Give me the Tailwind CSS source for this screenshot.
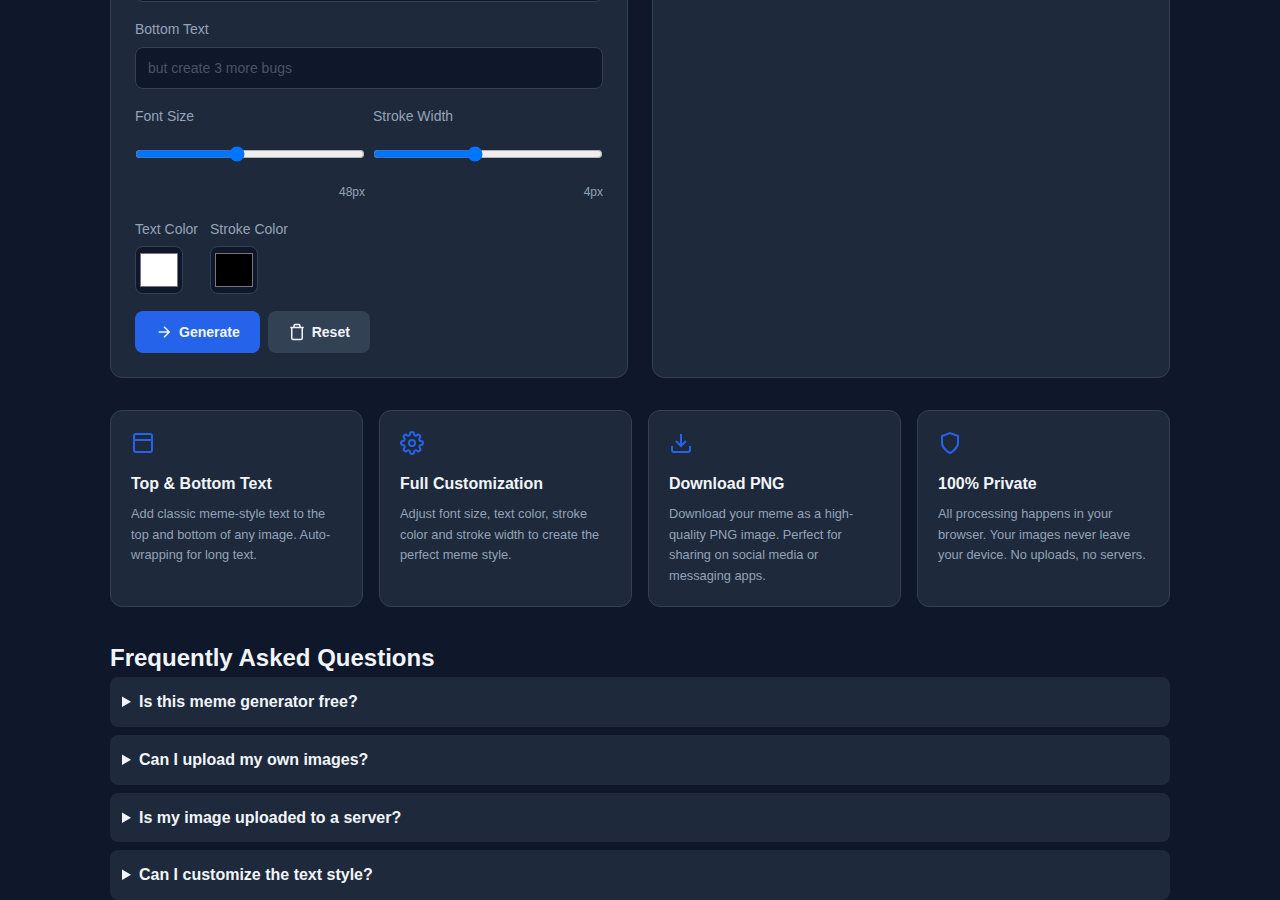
<!DOCTYPE html>
<html lang="en">
<head>
    <meta charset="UTF-8">
    <meta name="viewport" content="width=device-width, initial-scale=1.0">
    <title>Meme Generator</title>
    <script src="https://cdn.jsdelivr.net/npm/@tailwindcss/browser@4"></script>
</head>
<body class="bg-[#0f172a] text-[#f1f5f9] font-['Liberation_Sans',sans-serif] leading-[1.6] h-[900px] overflow-hidden">

    <main class="w-[1060px] mx-auto -mt-[64.6px]">

        <!-- Editor + Preview -->
        <div class="grid grid-cols-2 gap-6 mb-8">
            <div class="bg-[#1e293b] border border-[#334155] rounded-xl p-6 flex flex-col gap-4">
                <input id="top-text" type="text" aria-label="Top Text" class="h-[42px] w-full px-3 text-[14px] bg-[#0f172a] border border-[#334155] rounded-lg">
                <div class="flex flex-col gap-1.5">
                    <label for="bottom-text" class="text-[14px] leading-[22.4px] text-[#94a3b8]">Bottom Text</label>
                    <input id="bottom-text" type="text" placeholder="but create 3 more bugs" class="h-[42px] w-full px-3 text-[14px] bg-[#0f172a] border border-[#334155] rounded-lg placeholder:text-[#475569]">
                </div>

                <div class="grid grid-cols-2 gap-2">
                    <div class="flex flex-col gap-1.5">
                        <label for="font-size" class="text-[14px] leading-[22.4px] text-[#94a3b8]">Font Size</label>
                        <input id="font-size" type="range" min="20" max="84" value="48" class="w-full h-[42px]">
                        <span class="text-[12px] leading-[19.2px] mt-[1.4px] text-right text-[#94a3b8]">48px</span>
                    </div>
                    <div class="flex flex-col gap-1.5">
                        <label for="stroke-width" class="text-[14px] leading-[22.4px] text-[#94a3b8]">Stroke Width</label>
                        <input id="stroke-width" type="range" min="0.5" max="8.5" step="0.5" value="4" class="w-full h-[42px]">
                        <span class="text-[12px] leading-[19.2px] mt-[1.4px] text-right text-[#94a3b8]">4px</span>
                    </div>
                </div>

                <div class="flex gap-3">
                    <div class="flex flex-col gap-1.5">
                        <label for="text-color" class="text-[14px] leading-[22.4px] text-[#94a3b8]">Text Color</label>
                        <input id="text-color" type="color" value="#ffffff" class="size-12 p-0.5 bg-[#0f172a] border border-[#334155] rounded-lg">
                    </div>
                    <div class="flex flex-col gap-1.5">
                        <label for="stroke-color" class="text-[14px] leading-[22.4px] text-[#94a3b8]">Stroke Color</label>
                        <input id="stroke-color" type="color" value="#000000" class="size-12 p-0.5 bg-[#0f172a] border border-[#334155] rounded-lg">
                    </div>
                </div>

                <div class="flex gap-2 mt-[0.4px]">
                    <button class="flex items-center gap-1.5 h-[42px] px-5 pt-px bg-[#2563eb] rounded-lg text-[14px] font-semibold">
                        <svg class="size-[18px]" viewBox="0 0 24 24" fill="none" stroke="currentColor" stroke-width="2"><path d="M5 12h14M12 5l7 7-7 7"/></svg>
                        Generate
                    </button>
                    <button class="flex items-center gap-1.5 h-[42px] px-5 pt-px bg-[#334155] rounded-lg text-[14px] font-semibold">
                        <svg class="size-[18px]" viewBox="0 0 24 24" fill="none" stroke="currentColor" stroke-width="2"><path d="M3 6h18M19 6v14a2 2 0 0 1-2 2H7a2 2 0 0 1-2-2V6m3 0V4a2 2 0 0 1 2-2h4a2 2 0 0 1 2 2v2"/></svg>
                        Reset
                    </button>
                </div>
            </div>

            <div class="bg-[#1e293b] border border-[#334155] rounded-xl p-6"></div>
        </div>

        <!-- Features -->
        <div class="grid grid-cols-4 gap-4 mb-[31.85px]">
            <div class="bg-[#1e293b] border border-[#334155] rounded-xl p-5">
                <svg class="size-6 mb-4 text-[#2563eb]" viewBox="0 0 24 24" fill="none" stroke="currentColor" stroke-width="2"><rect x="3" y="3" width="18" height="18" rx="2"/><path d="M3 9h18"/></svg>
                <h3 class="text-[16px] leading-[25.6px] font-semibold mb-2">Top &amp; Bottom Text</h3>
                <p class="text-[12.8px] leading-[20.48px] text-[#94a3b8]">Add classic meme-style text to the top and bottom of any image. Auto-wrapping for long text.</p>
            </div>
            <div class="bg-[#1e293b] border border-[#334155] rounded-xl p-5">
                <svg class="size-6 mb-4 text-[#2563eb]" viewBox="0 0 24 24" fill="none" stroke="currentColor" stroke-width="2"><circle cx="12" cy="12" r="3"/><path d="M19.4 15a1.65 1.65 0 0 0 .33 1.82l.06.06a2 2 0 0 1-2.83 2.83l-.06-.06a1.65 1.65 0 0 0-1.82-.33 1.65 1.65 0 0 0-1 1.51V21a2 2 0 0 1-4 0v-.09A1.65 1.65 0 0 0 9 19.4a1.65 1.65 0 0 0-1.82.33l-.06.06a2 2 0 0 1-2.83-2.83l.06-.06a1.65 1.65 0 0 0 .33-1.82 1.65 1.65 0 0 0-1.51-1H3a2 2 0 0 1 0-4h.09A1.65 1.65 0 0 0 4.6 9a1.65 1.65 0 0 0-.33-1.82l-.06-.06a2 2 0 0 1 2.83-2.83l.06.06a1.65 1.65 0 0 0 1.82.33H9a1.65 1.65 0 0 0 1-1.51V3a2 2 0 0 1 4 0v.09a1.65 1.65 0 0 0 1 1.51 1.65 1.65 0 0 0 1.82-.33l.06-.06a2 2 0 0 1 2.83 2.83l-.06.06a1.65 1.65 0 0 0-.33 1.82V9a1.65 1.65 0 0 0 1.51 1H21a2 2 0 0 1 0 4h-.09a1.65 1.65 0 0 0-1.51 1z"/></svg>
                <h3 class="text-[16px] leading-[25.6px] font-semibold mb-2">Full Customization</h3>
                <p class="text-[12.8px] leading-[20.48px] text-[#94a3b8]">Adjust font size, text color, stroke color and stroke width to create the perfect meme style.</p>
            </div>
            <div class="bg-[#1e293b] border border-[#334155] rounded-xl p-5">
                <svg class="size-6 mb-4 text-[#2563eb]" viewBox="0 0 24 24" fill="none" stroke="currentColor" stroke-width="2"><path d="M21 15v4a2 2 0 0 1-2 2H5a2 2 0 0 1-2-2v-4M7 10l5 5 5-5M12 15V3"/></svg>
                <h3 class="text-[16px] leading-[25.6px] font-semibold mb-2">Download PNG</h3>
                <p class="text-[12.8px] leading-[20.48px] text-[#94a3b8]">Download your meme as a high-quality PNG image. Perfect for sharing on social media or messaging apps.</p>
            </div>
            <div class="bg-[#1e293b] border border-[#334155] rounded-xl p-5">
                <svg class="size-6 mb-4 text-[#2563eb]" viewBox="0 0 24 24" fill="none" stroke="currentColor" stroke-width="2"><path d="M12 22s8-4 8-10V5l-8-3-8 3v7c0 6 8 10 8 10z"/></svg>
                <h3 class="text-[16px] leading-[25.6px] font-semibold mb-2">100% Private</h3>
                <p class="text-[12.8px] leading-[20.48px] text-[#94a3b8]">All processing happens in your browser. Your images never leave your device. No uploads, no servers.</p>
            </div>
        </div>

        <!-- FAQ -->
        <h2 class="text-[24px] leading-[38.4px] font-bold">Frequently Asked Questions</h2>
        <div class="flex flex-col gap-2">
            <details class="bg-[#1e293b] rounded-lg p-3">
                <summary class="text-[16px] leading-[25.6px] font-semibold cursor-pointer">Is this meme generator free?</summary>
            </details>
            <details class="bg-[#1e293b] rounded-lg p-3">
                <summary class="text-[16px] leading-[25.6px] font-semibold cursor-pointer">Can I upload my own images?</summary>
            </details>
            <details class="bg-[#1e293b] rounded-lg p-3">
                <summary class="text-[16px] leading-[25.6px] font-semibold cursor-pointer">Is my image uploaded to a server?</summary>
            </details>
            <details class="bg-[#1e293b] rounded-lg p-3">
                <summary class="text-[16px] leading-[25.6px] font-semibold cursor-pointer">Can I customize the text style?</summary>
            </details>
        </div>
    </main>

</body>
</html>
